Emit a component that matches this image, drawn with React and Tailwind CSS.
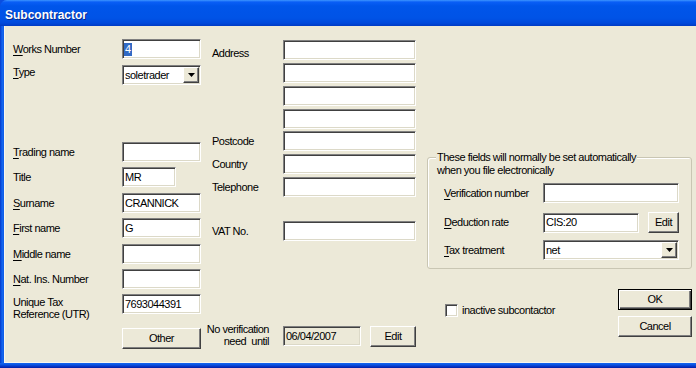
const sunken =
  "border border-t-[#808080] border-l-[#808080] border-r-white border-b-white shadow-[inset_1px_1px_0_#404040,inset_-1px_-1px_0_#dcd9c8]";
const raised =
  "bg-[#ece9d8] border border-t-white border-l-white border-r-[#404040] border-b-[#404040] shadow-[inset_-1px_-1px_0_#808080]";

const Ul = ({ children }) => <span className="underline underline-offset-2">{children}</span>;

const Box = ({ w = "w-[79px]", grey, children }) => (
  <div className={`${w} h-5 shrink-0 flex items-center pl-[2px] whitespace-nowrap ${sunken} ${grey ? "bg-[#ece9d8]" : "bg-white"}`}>
    {children}
  </div>
);

const Select = ({ w, value }) => (
  <div className={`${w} h-5 shrink-0 flex items-center bg-white ${sunken}`}>
    <span className="flex-1 pl-[2px]">{value}</span>
    <span className={`${raised} w-4 h-4 mr-px flex items-center justify-center`}>
      <svg width="7" height="4" viewBox="0 0 7 4">
        <path d="M0 0h7L3.5 4z" fill="#000" />
      </svg>
    </span>
  </div>
);

const Btn = ({ w, def, children }) => (
  <div
    className={`${w} h-[21px] shrink-0 flex items-center justify-center bg-[#ece9d8] ${
      def
        ? "border border-black shadow-[inset_1px_1px_0_#fff,inset_-1px_-1px_0_#404040,inset_-2px_-2px_0_#808080]"
        : raised
    }`}
  >
    {children}
  </div>
);

const Row = ({ lw, mt = "", label, children }) => (
  <div className={`flex items-center ${mt}`}>
    <div className={`${lw} shrink-0 whitespace-nowrap`}>{label}</div>
    {children}
  </div>
);

export default function App() {
  return (
    <div className="w-[696px] h-[368px] overflow-hidden flex flex-col bg-[#0a4ee0] font-['Liberation_Sans',Arial,sans-serif] text-[11px] tracking-[-0.5px] text-black leading-[13px]">
      {/* title bar */}
      <div className="h-[26px] shrink-0 rounded-tl-[7px] flex items-center pl-[5px] pt-[5px] bg-[linear-gradient(to_bottom,#3d95ff_0px,#0a5ef6_2px,#0055ea_6px,#0053e6_18px,#0049dc_23px,#003bc4_26px)]">
        <span className="text-white font-bold text-[12px] tracking-normal [text-shadow:1px_1px_#0b2a8a]">Subcontractor</span>
      </div>

      <div className="flex flex-1 min-h-0">
        {/* left frame */}
        <div className="w-[4px] shrink-0 bg-[linear-gradient(to_right,#0737c7,#0a55e4,#1566ee,#0c59e6)]" />

        {/* dialog body */}
        <div className="flex-1 bg-[#ece9d8] flex pl-[8px] border-l border-b border-white/60">
          {/* column 1 */}
          <div className="w-[188px] shrink-0 flex flex-col pt-[13px]">
            <Row lw="w-[109px]" label={<><Ul>W</Ul>orks Number</>}>
              <Box>
                <span className="bg-[#316ac5] text-white -ml-[1px] px-[1px]">4</span>
              </Box>
            </Row>
            <Row lw="w-[109px]" mt="mt-[6px]" label={<span className="relative -top-[3px]"><Ul>T</Ul>ype</span>}>
              <Select w="w-[79px]" value="soletrader" />
            </Row>
            <Row lw="w-[109px]" mt="mt-[57px]" label={<><Ul>T</Ul>rading name</>}>
              <Box />
            </Row>
            <Row lw="w-[109px]" mt="mt-[5px]" label="Title">
              <Box w="w-[54px]">MR</Box>
            </Row>
            <Row lw="w-[109px]" mt="mt-[6px]" label={<><Ul>S</Ul>urname</>}>
              <Box>CRANNICK</Box>
            </Row>
            <Row lw="w-[109px]" mt="mt-[5px]" label={<><Ul>F</Ul>irst name</>}>
              <Box>G</Box>
            </Row>
            <Row lw="w-[109px]" mt="mt-[6px]" label={<><Ul>M</Ul>iddle name</>}>
              <Box />
            </Row>
            <Row lw="w-[109px]" mt="mt-[5px]" label={<><Ul>N</Ul>at. Ins. Number</>}>
              <Box />
            </Row>
            <div className="flex items-start h-5 mt-[5px]">
              <div className="w-[109px] shrink-0 leading-[12px] mt-[2px]">
                Unique Tax
                <br />
                Reference (UTR)
              </div>
              <Box>7693044391</Box>
            </div>
            <div className="flex mt-[14px] pl-[109px]">
              <Btn w="w-[79px]">Other</Btn>
            </div>
          </div>

          {/* column 2 */}
          <div className="w-[204px] shrink-0 ml-[11px] flex flex-col pt-[14px]">
            <Row lw="w-[71px]" label={<span className="relative top-[3px]">Address</span>}>
              <Box w="w-[133px]" />
            </Row>
            <Row lw="w-[71px]" mt="mt-[3px]" label="">
              <Box w="w-[133px]" />
            </Row>
            <Row lw="w-[71px]" mt="mt-[3px]" label="">
              <Box w="w-[133px]" />
            </Row>
            <Row lw="w-[71px]" mt="mt-[3px]" label="">
              <Box w="w-[133px]" />
            </Row>
            <Row lw="w-[71px]" mt="mt-[2px]" label="Postcode">
              <Box w="w-[133px]" />
            </Row>
            <Row lw="w-[71px]" mt="mt-[3px]" label="Country">
              <Box w="w-[133px]" />
            </Row>
            <Row lw="w-[71px]" mt="mt-[3px]" label="Telephone">
              <Box w="w-[133px]" />
            </Row>
            <Row lw="w-[71px]" mt="mt-[24px]" label="VAT No.">
              <Box w="w-[133px]" />
            </Row>
            <div className="flex items-center h-5 mt-[85px]">
              <div className="w-[71px] shrink-0 flex justify-end pr-[14px] -mt-[3px]">
                <div className="whitespace-pre text-right leading-[12px] shrink-0">
                  {"No verification\nneed  until"}
                </div>
              </div>
              <Box w="w-[78px]" grey>06/04/2007</Box>
              <div className="ml-[9px]">
                <Btn w="w-[46px]">Edit</Btn>
              </div>
            </div>
          </div>

          {/* column 3 */}
          <div className="w-[265px] shrink-0 ml-[11px] flex flex-col pt-[131px]">
            <div className="relative h-[112px] border border-[#c9c6b3] rounded-[3px] shadow-[inset_1px_1px_0_#fff] pt-[5px] px-[9px]">
              <div className="absolute -top-[7px] left-[8px] px-[1px] bg-[#ece9d8] whitespace-nowrap">
                These fields will normally be set automatically
              </div>
              <div className="mt-[1px]">when you file electronically</div>
              <div className="ml-[7px] flex flex-col">
                <Row lw="w-[99px]" mt="mt-[6px]" label={<><Ul>V</Ul>erification number</>}>
                  <Box w="w-[136px]" />
                </Row>
                <Row lw="w-[99px]" mt="mt-[9px]" label={<><Ul>D</Ul>eduction rate</>}>
                  <Box w="w-[96px]">CIS:20</Box>
                  <div className="ml-[9px]">
                    <Btn w="w-[31px]">Edit</Btn>
                  </div>
                </Row>
                <Row lw="w-[99px]" mt="mt-[7px]" label={<><Ul>T</Ul>ax treatment</>}>
                  <Select w="w-[136px]" value="net" />
                </Row>
              </div>
            </div>

            <div className="flex justify-between items-start mt-[20px]">
              <div className="flex items-center ml-[18px] mt-[15px]">
                <div className={`w-[13px] h-[13px] bg-white ${sunken}`} />
                <span className="ml-[4px]">inactive subcontactor</span>
              </div>
              <div className="flex flex-col gap-[6px]">
                <Btn w="w-[74px]" def>OK</Btn>
                <Btn w="w-[74px]">Cancel</Btn>
              </div>
            </div>
          </div>
        </div>
      </div>

      {/* bottom frame */}
      <div className="h-[5px] shrink-0 bg-[linear-gradient(to_bottom,#1566ee,#0a55e4,#0737c7,#001ea8)]" />
    </div>
  );
}
